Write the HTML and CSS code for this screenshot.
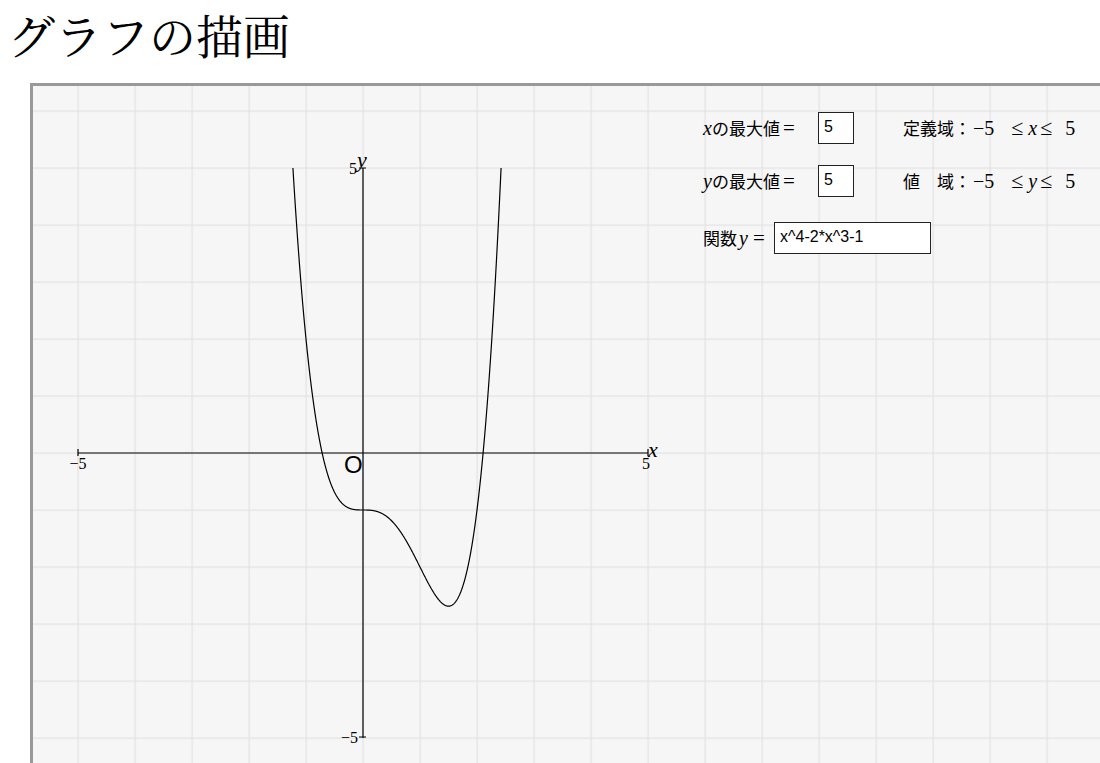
FILE: index.html
```html
<!DOCTYPE html>
<html lang="ja">
<head>
<meta charset="utf-8">
<title>グラフの描画</title>
<link rel="stylesheet" href="styles.css">
</head>
<body>
<h1 class="title">グラフの描画</h1>
<div class="board">
  <svg class="plot" width="1067" height="677" viewBox="33 86 1067 677" xmlns="http://www.w3.org/2000/svg">
    <defs>
      <pattern id="gridpat" patternUnits="userSpaceOnUse" x="77.5" y="110.5" width="57" height="57">
        <path d="M0 0.5 H57 M0.5 0 V57" stroke="#e2e2e2" stroke-width="1.4" fill="none"/>
      </pattern>
      <clipPath id="yclip">
        <rect x="33" y="168" width="1067" height="570"/>
      </clipPath>
    </defs>
    <rect x="33" y="86" width="1067" height="677" fill="url(#gridpat)"/>
    <g class="axes" stroke="#000" stroke-width="1.2" fill="none">
      <path d="M78 453 H648"/>
      <path d="M78 449 V456 M648 449 V456"/>
      <path d="M363 168 V738"/>
      <path d="M359 168 H366 M359 737 H366"/>
    </g>
    <polyline id="curve" clip-path="url(#yclip)" fill="none" stroke="#000" stroke-width="1.2" points=""/>
    <g class="ticks">
      <text x="78" y="469" text-anchor="middle">−5</text>
      <text x="646" y="469" text-anchor="middle">5</text>
      <text x="357" y="174" text-anchor="end">5</text>
      <text x="358" y="743" text-anchor="end">−5</text>
    </g>
    <text class="axis-name" x="648" y="457">x</text>
    <text class="axis-name" x="357" y="167">y</text>
    <text class="origin" x="344" y="473">O</text>
  </svg>
  <div class="panel">
    <div class="row">
      <span class="label"><span class="mi">x</span>の最大値<span class="mo eq">=</span></span>
      <input class="num" type="text" value="5">
      <span class="range">定義域：<span class="mo lo">−5</span><span class="rel rel-a">≤</span><span class="mi">x</span><span class="rel rel-b">≤</span><span class="mo">5</span></span>
    </div>
    <div class="row row-2">
      <span class="label"><span class="mi">y</span>の最大値<span class="mo eq">=</span></span>
      <input class="num" type="text" value="5">
      <span class="range">値　域：<span class="mo lo">−5</span><span class="rel rel-a">≤</span><span class="mi">y</span><span class="rel rel-b">≤</span><span class="mo">5</span></span>
    </div>
    <div class="row row-3">
      <span class="func-label">関数<span class="mi fy">y</span><span class="mo feq">=</span></span>
      <input class="func" type="text" value="x^4-2*x^3-1">
    </div>
  </div>
</div>
<script src="script.js"></script>
</body>
</html>
```

FILE: styles.css
```css
html, body {
  margin: 0;
  overflow: hidden;
  background: #fff;
}
body {
  padding: 0 8px;
}
.title {
  font-family: "Noto Serif CJK JP", "Noto Sans CJK JP", serif;
  font-weight: normal;
  font-size: 47px;
  line-height: 68px;
  margin: 0 0 15px 0;
  padding: 0;
  color: #000;
}
.board {
  position: relative;
  margin-left: 22px;
  width: 1100px;
  height: 700px;
  border-top: 3px solid #999;
  border-left: 3px solid #999;
  background: #f6f6f6;
}
.plot {
  display: block;
}
.ticks text {
  font-family: "Liberation Serif", serif;
  font-size: 16px;
  fill: #000;
}
.axis-name {
  font-family: "Liberation Serif", serif;
  font-style: italic;
  font-size: 22px;
  fill: #000;
}
.origin {
  font-family: "Liberation Sans", Arial, sans-serif;
  font-size: 24px;
  fill: #000;
}
.panel {
  position: absolute;
  left: 670px;
  top: 26px;
  display: flex;
  flex-direction: column;
  font-family: "Noto Sans CJK JP", sans-serif;
  font-size: 17px;
  color: #000;
}
.row {
  display: flex;
  align-items: center;
  height: 32px;
}
.row-2 {
  margin-top: 21px;
}
.row-3 {
  margin-top: 25px;
}
.label {
  width: 115px;
  white-space: nowrap;
}
.func-label {
  width: 71px;
  white-space: nowrap;
}
.mi {
  font-family: "Liberation Serif", serif;
  font-style: italic;
  font-size: 20px;
}
.mo {
  font-family: "Liberation Serif", serif;
  font-size: 20px;
}
.lo {
  margin-left: 2px;
}
.eq {
  margin-left: 3px;
  font-size: 21px;
}
.fy {
  margin-left: 2px;
}
.feq {
  margin-left: 5px;
  font-size: 21px;
}
.rel {
  font-family: "Liberation Serif", serif;
  font-size: 22px;
}
.rel-a {
  margin: 0 5px 0 17px;
}
.rel-b {
  margin: 0 13px 0 3px;
}
.range {
  margin-left: 49px;
  white-space: nowrap;
}
.num, .func {
  box-sizing: border-box;
  height: 32px;
  margin: 0;
  padding: 0 5px 2px;
  border: 1px solid #222;
  background: #fff;
  font-family: "Liberation Sans", Arial, sans-serif;
  font-size: 16px;
  color: #000;
  outline: none;
}
.num {
  width: 36px;
}
.func {
  width: 157px;
}
```

FILE: script.js
```js
(function () {
  var f = function (x) { return Math.pow(x, 4) - 2 * Math.pow(x, 3) - 1; };
  var pts = [];
  var n = 900;
  for (var i = 0; i <= n; i++) {
    var x = -1.3 + i * (3.85 / n);
    var px = 363 + 57 * x;
    var py = 453 - 57 * f(x);
    pts.push(px.toFixed(2) + ',' + py.toFixed(2));
  }
  document.getElementById('curve').setAttribute('points', pts.join(' '));
})();
```
